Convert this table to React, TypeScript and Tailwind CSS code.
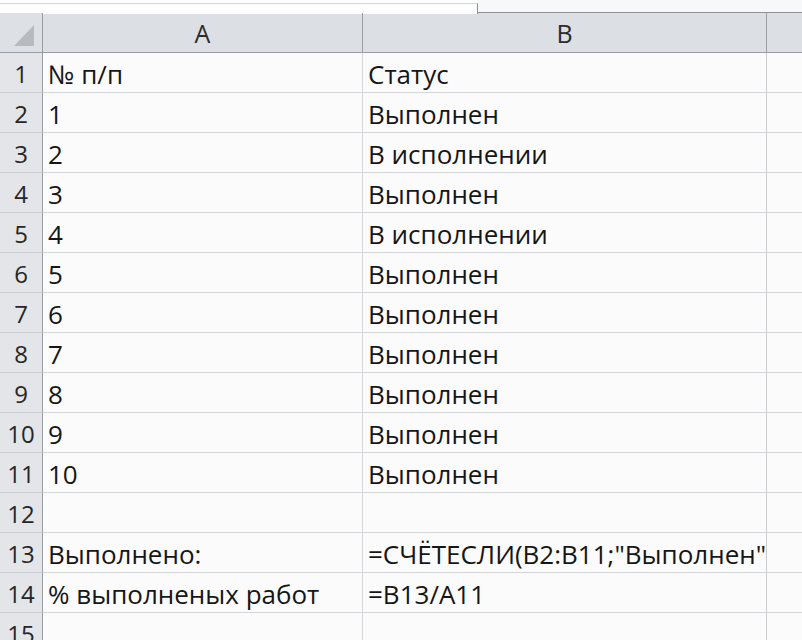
import React from "react";

const rows: [string, string, string][] = [
  ["1", "№ п/п", "Статус"],
  ["2", "1", "Выполнен"],
  ["3", "2", "В исполнении"],
  ["4", "3", "Выполнен"],
  ["5", "4", "В исполнении"],
  ["6", "5", "Выполнен"],
  ["7", "6", "Выполнен"],
  ["8", "7", "Выполнен"],
  ["9", "8", "Выполнен"],
  ["10", "9", "Выполнен"],
  ["11", "10", "Выполнен"],
  ["12", "", ""],
  ["13", "Выполнено:", "=СЧЁТЕСЛИ(B2:B11;\"Выполнен\""],
  ["14", "% выполненых работ", "=B13/A11"],
  ["15", "", ""],
];

export default function App() {
  return (
    <div
      className="w-[802px] h-[640px] overflow-hidden bg-[#fbfbfb] text-[#161616]"
      style={{ fontFamily: '"Open Sans", "Noto Sans", sans-serif' }}
    >
      {/* top strip (bottom of formula bar) */}
      <div className="flex h-[13px] border-b border-[#8d9095] bg-[#fdfdfd]">
        <div className="w-[478px] h-[11px] border-t border-r border-t-[#d3d5d8] border-r-[#8d9095] mt-[3px] bg-[#fefefe]" />
        <div className="flex-1 bg-[#f7f8f9]" />
      </div>
      {/* header row */}
      <div className="flex h-[40px] border-b border-[#9a9ea3] bg-[#dcdfe3] text-[#2b2b2b] text-[25px]">
        <div className="w-[43px] shrink-0 border-r border-[#9a9ea3] relative bg-[#dde0e4]">
          <svg className="absolute left-[14px] top-[12px]" width="20" height="21" viewBox="0 0 20 21">
            <polygon points="20,0 20,21 0,21" fill="#b7bbbf" />
          </svg>
        </div>
        <div className="w-[320px] shrink-0 border-r border-[#9a9ea3] flex items-center justify-center leading-none pt-[2px]">
          A
        </div>
        <div className="w-[404px] shrink-0 border-r border-[#9a9ea3] flex items-center justify-center leading-none pt-[2px]">
          B
        </div>
        <div className="flex-1" />
      </div>
      {rows.map(([n, a, b]) => (
        <div key={n} className="flex h-[40px] border-b border-[#d4d6d9] leading-none">
          <div className="w-[43px] shrink-0 border-r border-[#9a9ea3] bg-[#e3e5e8] border-b border-b-[#c9ccd0] -mb-px flex items-center justify-center text-[#262626] text-[24px] pt-[3px]">
            {n}
          </div>
          <div className="w-[320px] shrink-0 border-r border-[#d4d6d9] flex items-center pl-[5px] pt-[3px] whitespace-nowrap overflow-hidden text-[26px]">
            {a}
          </div>
          <div className="w-[404px] shrink-0 border-r border-[#c9cbce] flex items-center pl-[5px] pt-[3px] whitespace-nowrap overflow-hidden text-[26px]">
            {b}
          </div>
          <div className="flex-1" />
        </div>
      ))}
    </div>
  );
}
